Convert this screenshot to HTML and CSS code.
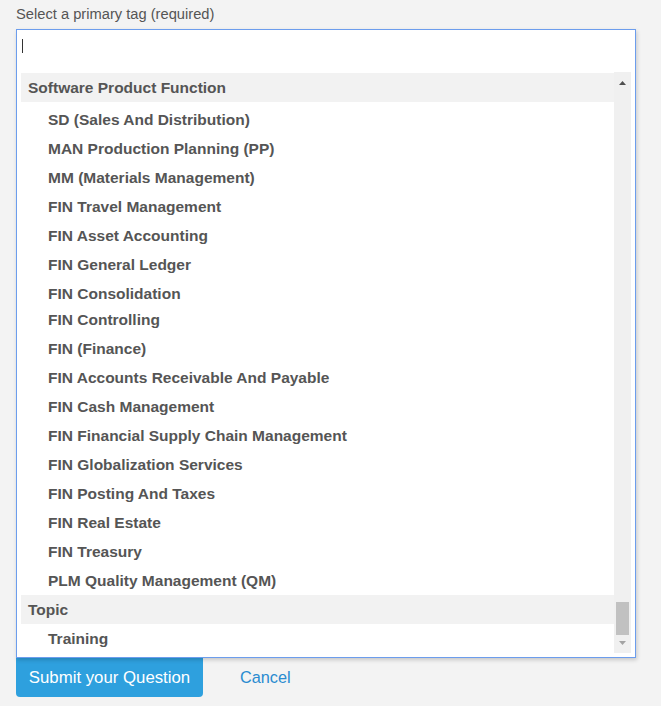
FILE: index.html
```html
<!DOCTYPE html>
<html>
<head>
<meta charset="utf-8">
<link rel="stylesheet" href="styles.css">
</head>
<body>
<div class="page">
  <div class="label">Select a primary tag (required)</div>
  <div class="combo">
    <div class="input"><span class="caret"></span></div>
    <div class="dropdown">
      <div class="list">
        <div class="group-head">Software Product Function</div>
        <ul class="group first">
          <li>SD (Sales And Distribution)</li>
          <li>MAN Production Planning (PP)</li>
          <li>MM (Materials Management)</li>
          <li>FIN Travel Management</li>
          <li>FIN Asset Accounting</li>
          <li>FIN General Ledger</li>
          <li>FIN Consolidation</li>
          <li class="tight">FIN Controlling</li>
          <li>FIN (Finance)</li>
          <li>FIN Accounts Receivable And Payable</li>
          <li>FIN Cash Management</li>
          <li>FIN Financial Supply Chain Management</li>
          <li>FIN Globalization Services</li>
          <li>FIN Posting And Taxes</li>
          <li>FIN Real Estate</li>
          <li>FIN Treasury</li>
          <li>PLM Quality Management (QM)</li>
        </ul>
        <div class="group-head">Topic</div>
        <ul class="group">
          <li>Training</li>
        </ul>
      </div>
      <div class="scrollbar">
        <svg class="arrow up" width="7" height="4" viewBox="0 0 7 4"><path d="M3.5 0L7 4H0z" fill="#4f4f4f"/></svg>
        <div class="track"><div class="thumb"></div></div>
        <svg class="arrow down" width="7" height="4" viewBox="0 0 7 4"><path d="M0 0H7L3.5 4z" fill="#a3a3a3"/></svg>
      </div>
    </div>
  </div>
  <div class="actions">
    <button class="submit">Submit your Question</button>
    <a class="cancel">Cancel</a>
  </div>
</div>
</body>
</html>
```

FILE: styles.css
```css
html, body {
  margin: 0;
  padding: 0;
  background: #f3f3f3;
  font-family: "Liberation Sans", Arial, sans-serif;
}
.page {
  padding: 5px 0 0 16px;
}
.label {
  font-size: 14.7px;
  line-height: 18px;
  color: #555;
  margin-bottom: 6px;
}
.combo {
  position: relative;
  z-index: 2;
  width: 618px;
  height: 627px;
  border: 1px solid #6c9ded;
  background: #fff;
  box-shadow: 1px 2px 4px rgba(0,0,0,0.18);
  display: flex;
  flex-direction: column;
}
.input {
  height: 42px;
  padding: 9px 0 0 5px;
  box-sizing: border-box;
}
.caret {
  display: block;
  width: 1px;
  height: 14px;
  background: #333;
}
.dropdown {
  flex: 1;
  display: flex;
  padding: 0 4px 4px 4px;
  overflow: hidden;
}
.list {
  flex: 1;
  padding-top: 1px;
  color: #555;
  font-weight: bold;
  font-size: 15.5px;
}
.group-head {
  height: 29px;
  line-height: 30px;
  background: #f2f2f2;
  padding-left: 7px;
}
.group {
  list-style: none;
  margin: 0;
  padding: 0;
}
.group.first {
  padding-top: 3px;
}
.group li {
  height: 29px;
  line-height: 30px;
  padding-left: 27px;
}
.group li.tight {
  height: 26px;
  line-height: 24px;
}
.scrollbar {
  width: 17px;
  background: #f0f0f0;
  display: flex;
  flex-direction: column;
  align-items: center;
}
.arrow {
  display: block;
  flex: none;
}
.arrow.up {
  margin-top: 9px;
}
.arrow.down {
  margin: 6px 0 8px;
}
.track {
  flex: 1;
  width: 13px;
  display: flex;
  flex-direction: column;
  justify-content: flex-end;
}
.thumb {
  height: 33px;
  background: #c1c1c1;
}
.actions {
  display: flex;
  align-items: center;
}
.submit {
  width: 187px;
  height: 41px;
  margin-top: -2px;
  border: none;
  border-radius: 0 0 4px 4px;
  background: #2ea0de;
  color: #fff;
  font-family: "Liberation Sans", Arial, sans-serif;
  font-size: 16.8px;
  padding: 2px 0 0 0;
}
.cancel {
  margin-left: 37px;
  color: #2a8bd0;
  font-size: 16.3px;
  margin-top: 0;
}
```
